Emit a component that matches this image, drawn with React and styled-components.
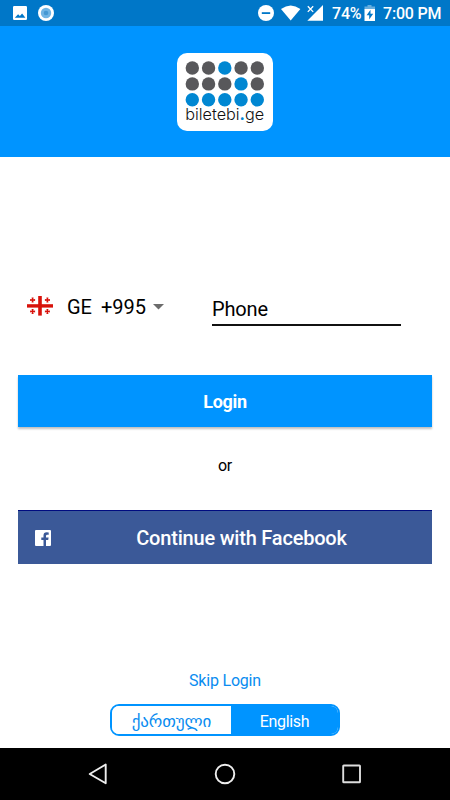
import styled, { createGlobalStyle } from "styled-components";

const seats = ["ddbdd", "dddbd", "bbbbb"];

const languages = [
  { id: "ka", label: "ქართული" },
  { id: "en", label: "English" },
];

const Logo = () => (
  <svg width="96" height="78" viewBox="0 0 96 78">
    {seats.map((row, y) =>
      row.split("").map((seat, x) => (
        <circle
          key={`${x}-${y}`}
          cx={15.3 + x * 16.25}
          cy={15 + y * 15.9}
          r="6.7"
          fill={seat === "b" ? "#0087d2" : "#58585b"}
        />
      ))
    )}
    <text
      x="8.2"
      y="67"
      fontFamily="Inter, sans-serif"
      fontSize="16"
      fontWeight="300"
      textLength="79"
      lengthAdjust="spacingAndGlyphs"
      fill="#111"
    >
      biletebi<tspan fill="#0087d2" fontWeight="700">.</tspan>ge
    </text>
  </svg>
);

const Flag = () => (
  <svg width="26" height="20" viewBox="0 0 26 20">
    <g fill="#d8120b">
      <rect x="11.2" y="0" width="3.6" height="19.6" />
      <rect x="0" y="8.2" width="26" height="3.4" />
      {[
        [5.6, 4],
        [20.4, 4],
        [5.6, 15.4],
        [20.4, 15.4],
      ].map(([x, y]) => (
        <path
          key={`${x}-${y}`}
          d={`M${x - 1} ${y - 2.5}h2l-.3 1.8 1.8-.3v2l-1.8-.3.3 1.8h-2l.3-1.8-1.8.3v-2l1.8.3z`}
        />
      ))}
    </g>
  </svg>
);

const App = () => {
  return (
    <Screen>
      <GlobalStyle />
      <StatusBar>
        <svg width="60" height="26" viewBox="0 0 60 26">
          <path
            fill="#fff"
            fillRule="evenodd"
            d="M14.2 6h11.6q1.2 0 1.2 1.2v11.6q0 1.2-1.2 1.2H14.2q-1.2 0-1.2-1.2V7.2q0-1.2 1.2-1.2zM14.8 17.7h10.6l-3.3-4.3-2.2 2.7-1.8-1.9z"
          />
          <circle cx="46" cy="13" r="8" fill="#fff" />
          <circle cx="46" cy="13" r="5.2" fill="#70b4e4" />
          <circle cx="46" cy="13" r="2.3" fill="#4598d3" />
        </svg>
        <StatusRight>
          <svg width="68" height="26" viewBox="258 0 68 26">
            <circle cx="267" cy="13" r="8" fill="#fff" />
            <rect x="262.8" y="12.2" width="8.4" height="1.8" fill="#0077c8" />
            <path d="M282 9q9.7-7 19.4 0L291.7 20.6z" fill="#fff" />
            <path d="M324 5v15.7h-15.7z" fill="#fff" />
            <path d="M308 5.5h7.5v7.5h-7.5z" fill="#0077c8" />
            <path d="M308.8 6.3l5.4 5.6M314.2 6.3l-5.4 5.6" stroke="#fff" strokeWidth="1.3" />
          </svg>
          <StatusText $left={7} $width={28}>74%</StatusText>
          <svg width="12" height="26" viewBox="0 0 12 26">
            <path d="M3.5 5h4v1.5H11v3H.5v-3h3z" fill="#66aede" />
            <path d="M.5 9H11v12H.5z" fill="#fff" />
            <path d="M6.5 9.8L2.6 15.2h2.6v4.3l4-5.8H6.5z" fill="#0077c8" />
          </svg>
          <StatusText $left={7} $width={59}>7:00 PM</StatusText>
        </StatusRight>
      </StatusBar>
      <Header>
        <LogoCard>
          <Logo />
        </LogoCard>
      </Header>
      <Content>
        <PhoneRow>
          <CountryPicker>
            <Flag />
            <CountryCode>GE</CountryCode>
            <DialCode>+995</DialCode>
            <Caret viewBox="0 0 11 6">
              <path d="M0 0h11L5.5 5.6z" fill="#6c6c6c" />
            </Caret>
          </CountryPicker>
          <PhoneInput type="tel" placeholder="Phone" />
        </PhoneRow>
        <LoginButton>Login</LoginButton>
        <Or>or</Or>
        <FacebookButton>
          <svg width="16" height="16" viewBox="0 0 16 16">
            <path
              fill="#fff"
              d="M1 0h14q1 0 1 1v14q0 1-1 1h-4V9.9h2.2l.4-2.500H11V6q0-1.300 1.300-1.300h1.400V2.400q-.8-.2-2-.2-3.200 0-3.200 3.300v1.900H6.300v2.500h2.200V16H1q-1 0-1-1V1q0-1 1-1z"
            />
          </svg>
          <FacebookLabel>Continue with Facebook</FacebookLabel>
        </FacebookButton>
        <SkipLink>Skip Login</SkipLink>
        <LanguageSwitch>
          {languages.map((lang) => (
            <Language key={lang.id} $active={lang.id === "en"}>
              {lang.label}
            </Language>
          ))}
        </LanguageSwitch>
      </Content>
      <NavBar>
        <svg width="20" height="22" viewBox="0 0 20 22">
          <path d="M17.7 1.5v18.8L1.7 11z" fill="none" stroke="#eee" strokeWidth="1.9" strokeLinejoin="round" />
        </svg>
        <svg width="22" height="22" viewBox="0 0 22 22">
          <circle cx="11" cy="11" r="9.3" fill="none" stroke="#eee" strokeWidth="1.9" />
        </svg>
        <svg width="20" height="20" viewBox="0 0 20 20">
          <rect x="1.2" y="1.5" width="16.8" height="16.8" rx=".6" fill="none" stroke="#ddd" strokeWidth="1.9" />
        </svg>
      </NavBar>
    </Screen>
  );
};

export default App;

const GlobalStyle = createGlobalStyle`
  * {
    box-sizing: border-box;
  }
  body {
    margin: 0;
    font-family: Roboto, sans-serif;
  }
  svg {
    display: block;
    flex-shrink: 0;
  }
  button {
    border: 0;
    padding: 0;
    font-family: inherit;
  }
`;

const Screen = styled.div`
  width: 450px;
  height: 800px;
  display: flex;
  flex-direction: column;
  background: #fff;
  color: #000;
  overflow: hidden;
`;

const StatusBar = styled.div`
  height: 26px;
  display: flex;
  justify-content: space-between;
  background: #0077c8;
`;

const StatusRight = styled.div`
  display: flex;
  align-items: center;
  padding-right: 8px;
`;

const StatusText = styled.span`
  width: ${(props) => props.$width}px;
  margin-left: ${(props) => props.$left}px;
  margin-right: ${(props) => (props.$width < 40 ? 4 : 0)}px;
  padding-top: 2px;
  font-size: 16px;
  font-weight: 500;
  line-height: 26px;
  letter-spacing: -0.2px;
  white-space: nowrap;
  color: #fff;
`;

const Header = styled.header`
  height: 131px;
  display: flex;
  justify-content: center;
  padding-top: 27px;
  background: #0094ff;
`;

const LogoCard = styled.div`
  width: 96px;
  height: 78px;
  border-radius: 10px;
  background: #fff;
`;

const Content = styled.main`
  flex: 1;
  display: flex;
  flex-direction: column;
  padding: 131px 18px 0;
`;

const PhoneRow = styled.div`
  display: flex;
  height: 38px;
  padding-left: 9px;
`;

const CountryPicker = styled.div`
  display: flex;
  align-items: center;
  width: 185px;
  height: 36px;
  font-size: 20px;
`;

const CountryCode = styled.span`
  width: 34px;
  margin-left: 14px;
  padding-top: 2px;
`;

const DialCode = styled.span`
  padding-top: 2px;
`;

const Caret = styled.svg`
  width: 11px;
  height: 6px;
  margin: 1px 0 0 7px;
`;

const PhoneInput = styled.input`
  width: 189px;
  height: 38px;
  padding: 6px 0 0;
  border: 0;
  border-bottom: 2px solid #111;
  outline: 0;
  font-family: inherit;
  font-size: 20px;
  letter-spacing: -0.15px;
  &::placeholder {
    color: #000;
    opacity: 1;
  }
`;

const LoginButton = styled.button`
  flex-shrink: 0;
  height: 52px;
  margin-top: 49px;
  background: #0094ff;
  box-shadow: 0 2px 2px rgba(0, 0, 0, 0.25);
  color: #fff;
  font-size: 18px;
  font-weight: 700;
  letter-spacing: -0.3px;
`;

const Or = styled.div`
  margin-top: 27px;
  font-size: 16px;
  line-height: 24px;
  letter-spacing: -0.2px;
  text-align: center;
`;

const FacebookButton = styled.button`
  flex-shrink: 0;
  display: flex;
  align-items: center;
  height: 54px;
  margin-top: 32px;
  padding-left: 17px;
  border-top: 1px solid #000c80;
  background: #3b5998;
  color: #fff;
`;

const FacebookLabel = styled.span`
  flex: 1;
  padding-top: 1px;
  font-size: 20px;
  font-weight: 500;
  letter-spacing: -0.2px;
`;

const SkipLink = styled.a`
  margin-top: 105px;
  font-size: 16px;
  line-height: 24px;
  letter-spacing: -0.2px;
  text-align: center;
  color: #0a8cf0;
`;

const LanguageSwitch = styled.div`
  display: flex;
  width: 230px;
  height: 32px;
  margin: 11px auto 0;
  border: 2px solid #0094ff;
  border-radius: 9px;
  overflow: hidden;
`;

const Language = styled.button`
  flex: ${(props) => (props.$active ? "0 0 107px" : "1")};
  padding-top: ${(props) => (props.$active ? 2 : 1)}px;
  background: ${(props) => (props.$active ? "#0094ff" : "#fff")};
  color: ${(props) => (props.$active ? "#fff" : "#0a8cf0")};
  font-family: Roboto, "DejaVu Sans", sans-serif;
  font-size: ${(props) => (props.$active ? 16 : 17)}px;
  letter-spacing: ${(props) => (props.$active ? "-0.3px" : "-0.1px")};
`;

const NavBar = styled.nav`
  display: flex;
  align-items: center;
  justify-content: space-between;
  height: 52px;
  padding: 0 88px;
  background: #000;
`;
